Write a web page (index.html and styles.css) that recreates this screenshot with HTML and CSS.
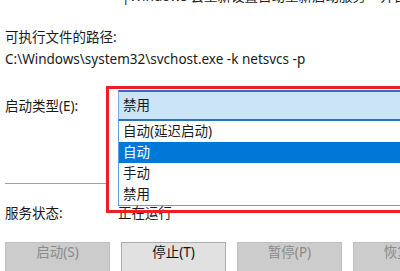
FILE: index.html
```html
<!DOCTYPE html>
<html lang="zh-CN">
<head>
  <meta charset="UTF-8" />
  <title>服务属性 - 启动类型</title>
  <link rel="stylesheet" href="styles.css">
</head>
<body>
  <div class="dialog">
    <div class="top-note"><span>|Windows 会重新设置自动重新启动服务    并自动运行程序</span></div>

    <div class="field-label">可执行文件的路径:</div>
    <div class="path">C:\Windows\system32\svchost.exe -k netsvcs -p</div>

    <div class="row startup">
      <div class="row-label">启动类型(E):</div>
      <div class="combo">
        <div class="combo-value">禁用</div>
        <ul class="combo-list">
          <li>自动(延迟启动)</li>
          <li class="active">自动</li>
          <li>手动</li>
          <li>禁用</li>
        </ul>
      </div>
    </div>

    <div class="separator"></div>

    <div class="row status">
      <div class="row-label">服务状态:</div>
      <div class="status-value">正在运行</div>
    </div>

    <div class="buttons">
      <button class="btn" disabled>启动(S)</button>
      <button class="btn">停止(T)</button>
      <button class="btn" disabled>暂停(P)</button>
      <button class="btn" disabled>恢复(R)</button>
    </div>

    <div class="highlight-frame"></div>
  </div>
</body>
</html>
```

FILE: styles.css
```css
body {
  margin: 0;
  background-color: white;
  font-family: "Noto Sans", "Noto Sans CJK SC", sans-serif;
  font-size: 13.5px;
  color: #1a1a1a;
  overflow: hidden;
}
.dialog {
  position: relative;
  height: 271px;
  padding: 0 0 0 5px;
  overflow: hidden;
}
.top-note {
  height: 7px;
  overflow: hidden;
  padding-left: 117px;
  white-space: pre;
}
.top-note span {
  display: block;
  margin-top: -14px;
  line-height: 20px;
  color: #222;
}
.field-label {
  margin-top: 20px;
  line-height: 20px;
}
.path {
  margin-top: 2px;
  line-height: 20px;
}
.row {
  display: flex;
  align-items: center;
}
.row-label {
  width: 113px;
  line-height: 20px;
}
.startup {
  margin-top: 21px;
}
.combo {
  position: relative;
  flex: 1;
}
.combo-value {
  box-sizing: border-box;
  height: 31px;
  line-height: 27px;
  padding-left: 4px;
  background-color: #cce4f7;
  border-top: 2px solid #2d6fc0;
  border-bottom: 2px solid #2d6fc0;
  border-left: 1px solid #7aa9dc;
}
.combo-list {
  position: absolute;
  left: 0;
  right: 0;
  top: 31px;
  margin: 0;
  padding: 0;
  list-style: none;
  background-color: white;
  border-left: 1px solid #5f9fe3;
  border-bottom: 1px solid #5f9fe3;
  z-index: 2;
}
.combo-list li {
  height: 21px;
  line-height: 21px;
  padding-left: 4px;
}
.combo-list li.active {
  background-color: #0078d7;
  color: white;
}
.separator {
  margin-top: 62px;
  width: 102px;
  border-top: 1px solid #a0a0a0;
}
.status {
  margin-top: 19px;
}
.status-value {
  line-height: 20px;
}
.buttons {
  display: flex;
  gap: 11px;
  margin-top: 19px;
}
.btn {
  flex: none;
  width: 105px;
  height: 34px;
  padding: 0 0 16px;
  font-family: inherit;
  font-size: 13.5px;
  line-height: 18px;
  background-color: #e1e1e1;
  border: 1px solid #adadad;
  color: #111;
}
.btn:disabled {
  background-color: #cccccc;
  border-color: #bfbfbf;
  color: #8a8a8a;
}
.highlight-frame {
  position: absolute;
  left: 106px;
  top: 86px;
  width: 320px;
  height: 121px;
  border: 3px solid #ec1f27;
  z-index: 3;
}
```
